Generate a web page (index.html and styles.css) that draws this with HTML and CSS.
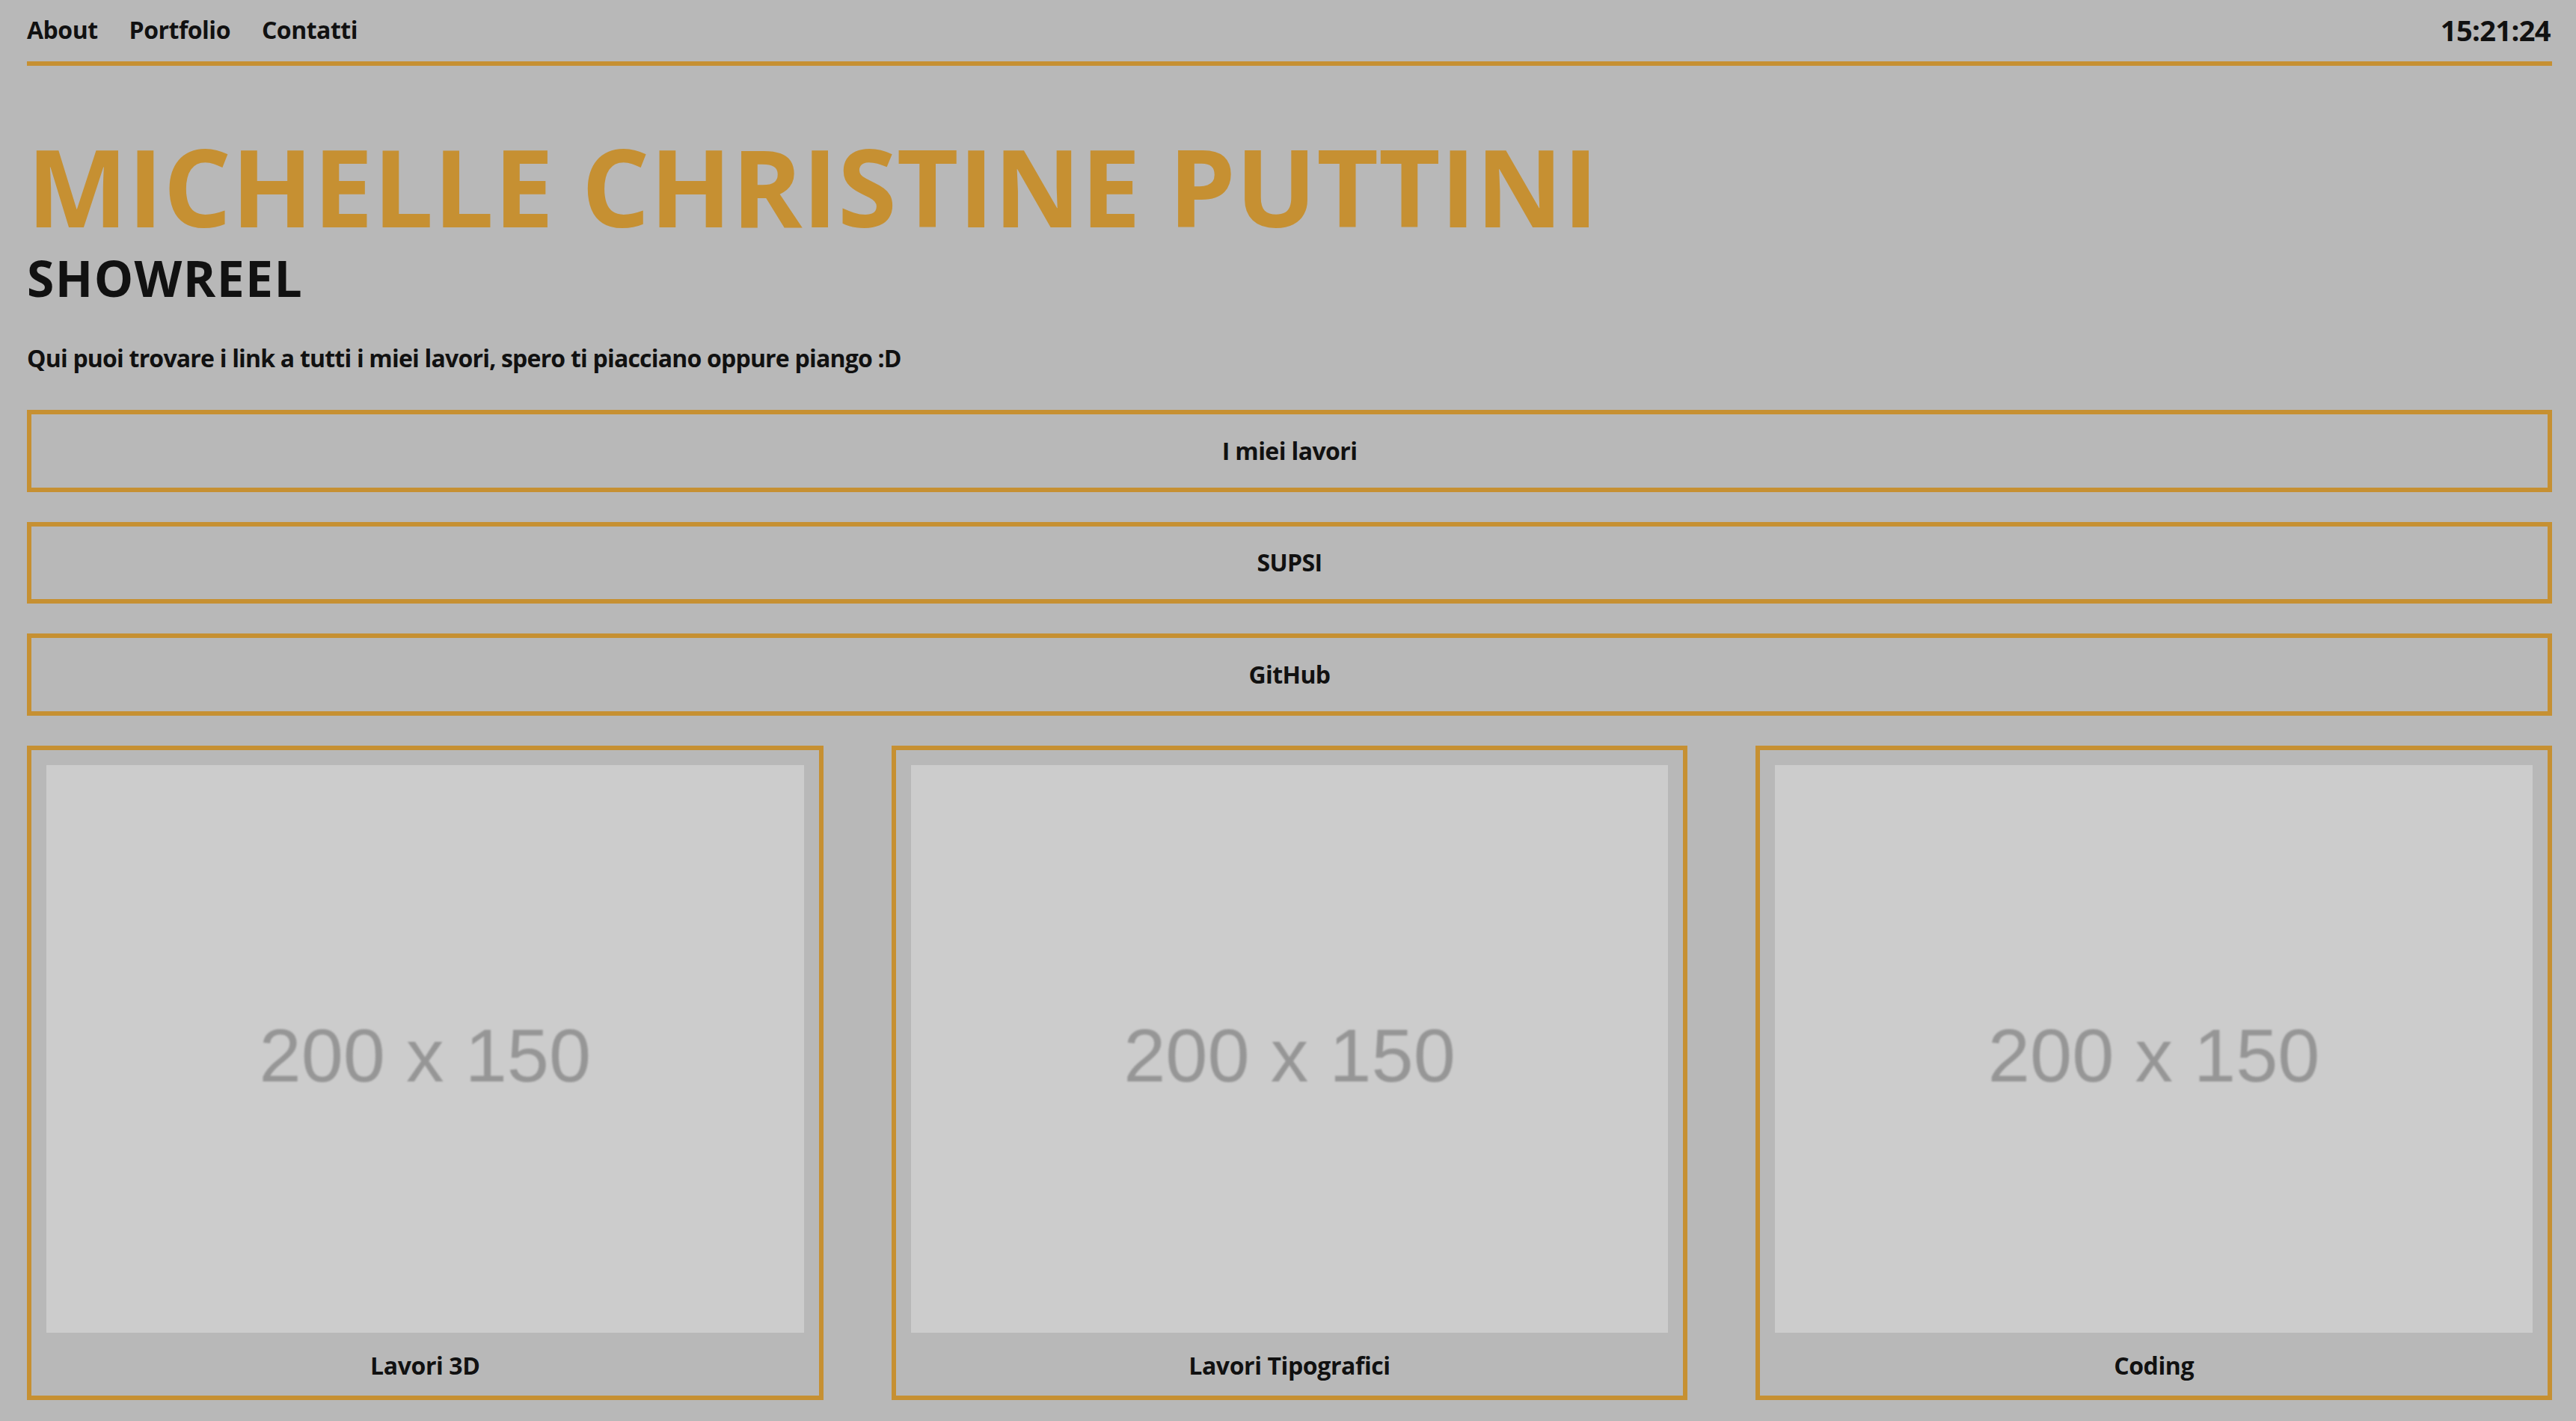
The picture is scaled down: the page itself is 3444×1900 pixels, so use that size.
FILE: index.html
```html
<!DOCTYPE html>
<html lang="it">
<head>
<meta charset="utf-8">
<title>Michelle Christine Puttini - Showreel</title>
<link rel="stylesheet" href="styles.css">
</head>
<body>
<div class="page">
  <header class="topbar">
    <nav class="nav">
      <a href="#" class="nav-link">About</a>
      <a href="#" class="nav-link">Portfolio</a>
      <a href="#" class="nav-link">Contatti</a>
    </nav>
    <span class="clock">15:21:24</span>
  </header>
  <main>
    <h1 class="title">MICHELLE CHRISTINE PUTTINI</h1>
    <h2 class="subtitle">SHOWREEL</h2>
    <p class="intro">Qui puoi trovare i link a tutti i miei lavori, spero ti piacciano oppure piango :D</p>
    <div class="links">
      <a href="#" class="link-btn">I miei lavori</a>
      <a href="#" class="link-btn">SUPSI</a>
      <a href="#" class="link-btn">GitHub</a>
    </div>
    <div class="cards">
      <a href="#" class="card">
        <div class="thumb"><span class="thumb-text">200 x 150</span></div>
        <div class="caption">Lavori 3D</div>
      </a>
      <a href="#" class="card">
        <div class="thumb"><span class="thumb-text">200 x 150</span></div>
        <div class="caption">Lavori Tipografici</div>
      </a>
      <a href="#" class="card">
        <div class="thumb"><span class="thumb-text">200 x 150</span></div>
        <div class="caption">Coding</div>
      </a>
    </div>
  </main>
</div>
</body>
</html>
```

FILE: styles.css
```css
* { box-sizing: border-box; }

html, body {
  margin: 0;
  padding: 0;
  background: #b8b8b8;
}

body {
  font-family: "Open Sans", "Noto Sans", sans-serif;
  font-weight: 700;
  color: #111111;
}

a { color: inherit; text-decoration: none; }

.page {
  padding: 18px 32px 0 36px;
}

.topbar {
  display: flex;
  justify-content: space-between;
  align-items: flex-start;
  padding-bottom: 20px;
  border-bottom: 6px solid #c69032;
}

.nav {
  display: flex;
  gap: 42px;
}

.nav-link {
  font-size: 32px;
  line-height: 44px;
  letter-spacing: -0.5px;
}

.clock {
  font-size: 38px;
  line-height: 44px;
  letter-spacing: -0.6px;
  padding-right: 2px;
}

.title {
  margin: 89px 0 0;
  font-size: 143px;
  line-height: 143px;
  font-weight: 700;
  color: #c69032;
  white-space: nowrap;
}

.subtitle {
  margin: 18px 0 0;
  font-size: 66px;
  line-height: 66px;
  font-weight: 700;
  letter-spacing: 1.4px;
  color: #111111;
}

.intro {
  margin: 53px 0 0;
  font-size: 32px;
  line-height: 44px;
  letter-spacing: -0.8px;
}

.links {
  display: flex;
  flex-direction: column;
  gap: 40px;
  margin-top: 47px;
}

.link-btn {
  display: flex;
  align-items: center;
  justify-content: center;
  height: 109.5px;
  border: 6px solid #c69032;
  font-size: 32px;
  line-height: 44px;
  letter-spacing: -0.6px;
}

.cards {
  display: grid;
  grid-template-columns: repeat(3, 1fr);
  column-gap: 91px;
  margin-top: 40px;
}

.card {
  display: flex;
  flex-direction: column;
  border: 6px solid #c69032;
  padding: 20px 20px 0;
}

.thumb {
  aspect-ratio: 4 / 3;
  background: #cccccc;
  display: flex;
  align-items: center;
  justify-content: center;
  padding-top: 18px;
}

.thumb-text {
  font-family: "Liberation Sans", Arial, sans-serif;
  font-weight: 400;
  font-size: 101px;
  line-height: 1;
  color: #969696;
  filter: blur(1.3px);
}

.caption {
  padding: 22px 0 18px;
  text-align: center;
  font-size: 32px;
  line-height: 44px;
  letter-spacing: -0.4px;
}
```
